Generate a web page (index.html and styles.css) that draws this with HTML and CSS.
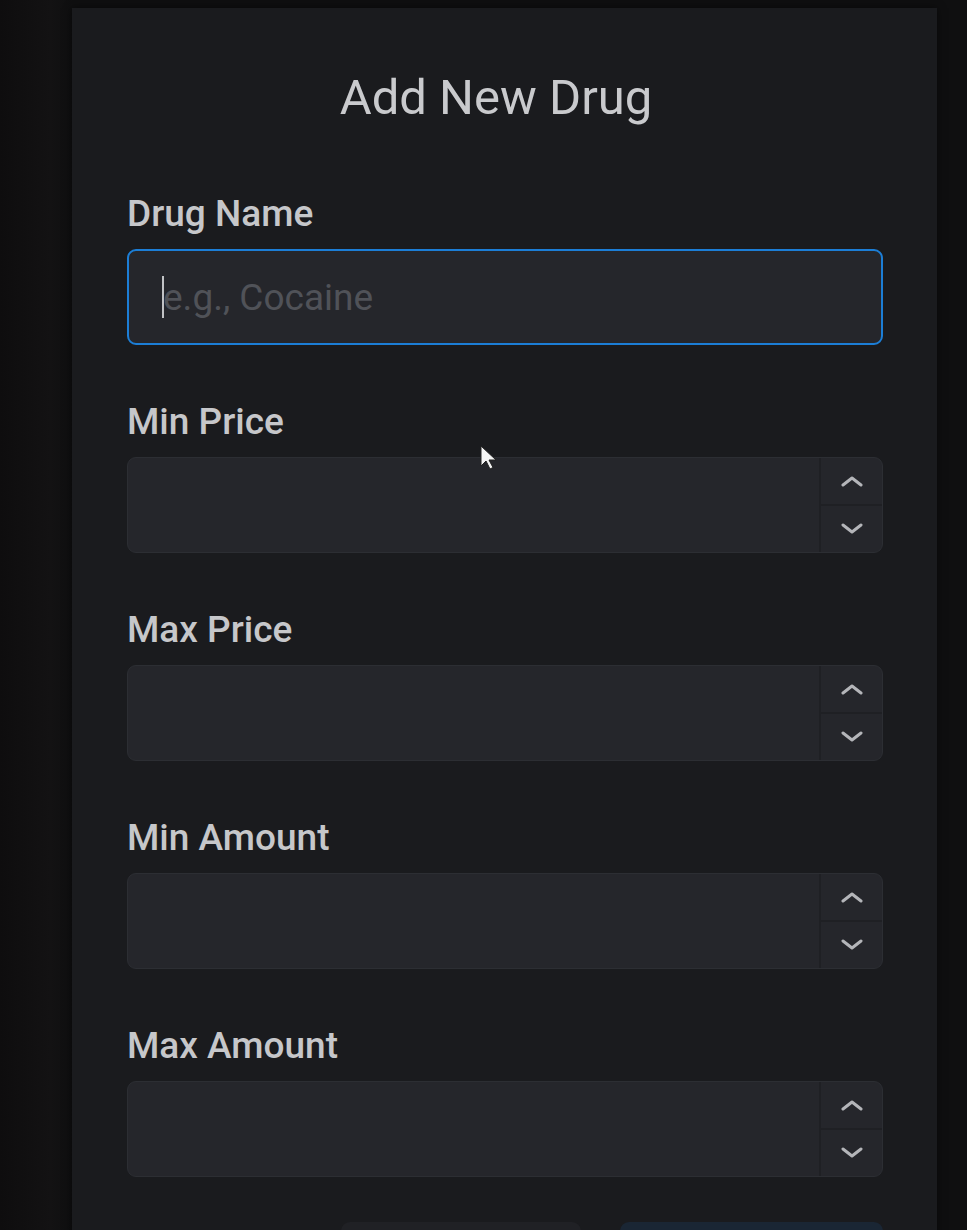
FILE: index.html
```html
<!DOCTYPE html>
<html>
<head>
    <title>Add New Drug</title>
    <link rel="stylesheet" href="styles.css">
</head>
<body>
    <div class="stage">
        <div class="drug-modal">
            <h2 class="modal-title">Add New Drug</h2>

            <div class="form-group">
                <label for="drugName">Drug Name</label>
                <div class="input-wrap focused">
                    <span class="caret"></span>
                    <input type="text" id="drugName" placeholder="e.g., Cocaine">
                </div>
            </div>

            <div class="form-group">
                <label for="minPrice">Min Price</label>
                <div class="input-wrap number">
                    <input type="text" id="minPrice">
                    <div class="controls">
                        <button class="ctrl"><svg viewBox="0 0 24 12"><path d="M3 10 L12 3 L21 10"/></svg></button>
                        <button class="ctrl"><svg viewBox="0 0 24 12"><path d="M3 2 L12 9 L21 2"/></svg></button>
                    </div>
                </div>
            </div>

            <div class="form-group">
                <label for="maxPrice">Max Price</label>
                <div class="input-wrap number">
                    <input type="text" id="maxPrice">
                    <div class="controls">
                        <button class="ctrl"><svg viewBox="0 0 24 12"><path d="M3 10 L12 3 L21 10"/></svg></button>
                        <button class="ctrl"><svg viewBox="0 0 24 12"><path d="M3 2 L12 9 L21 2"/></svg></button>
                    </div>
                </div>
            </div>

            <div class="form-group">
                <label for="minAmount">Min Amount</label>
                <div class="input-wrap number">
                    <input type="text" id="minAmount">
                    <div class="controls">
                        <button class="ctrl"><svg viewBox="0 0 24 12"><path d="M3 10 L12 3 L21 10"/></svg></button>
                        <button class="ctrl"><svg viewBox="0 0 24 12"><path d="M3 2 L12 9 L21 2"/></svg></button>
                    </div>
                </div>
            </div>

            <div class="form-group">
                <label for="maxAmount">Max Amount</label>
                <div class="input-wrap number">
                    <input type="text" id="maxAmount">
                    <div class="controls">
                        <button class="ctrl"><svg viewBox="0 0 24 12"><path d="M3 10 L12 3 L21 10"/></svg></button>
                        <button class="ctrl"><svg viewBox="0 0 24 12"><path d="M3 2 L12 9 L21 2"/></svg></button>
                    </div>
                </div>
            </div>

            <!-- buttons run off the bottom of the view, only their top edge shows -->
            <div class="button-row">
                <button class="btn btn-cancel" aria-label="Cancel"></button>
                <button class="btn btn-add" aria-label="Add Drug"></button>
            </div>
        </div>

        <svg class="pointer" viewBox="0 0 20 26">
            <path d="M1 1 L1 21 L6 16 L10 24 L13 22.5 L9 15 L16 15 Z"/>
        </svg>
    </div>
</body>
</html>
```

FILE: styles.css
```css
html, body {
    margin: 0;
    padding: 0;
}

body {
    background-color: #0f0f10;
    font-family: Roboto, "Liberation Sans", sans-serif;
    color: #c1c2c5;
}

.stage {
    position: relative;
    height: 1230px;
    overflow: hidden;
    padding-top: 8px;
    box-sizing: border-box;
    background: linear-gradient(90deg, #0e0d0e 0px, #131213 50px, #0f0f10 72px);
}

.drug-modal {
    margin-left: 72px;
    width: 865px;
    background-color: #1a1b1e;
    padding: 61px 54px 40px 55px;
    box-sizing: border-box;
    box-shadow: 0 0 8px rgba(0, 0, 0, 0.5);
}

.modal-title {
    margin: 0 0 61px 0;
    text-align: center;
    font-size: 49px;
    font-weight: 400;
    line-height: 57px;
    color: #c9cacd;
    padding-right: 18px;
}

.form-group {
    margin-bottom: 50px;
}

.form-group label {
    display: block;
    font-size: 37px;
    font-weight: 500;
    line-height: 54px;
    margin-bottom: 8px;
    color: #c6c7ca;
}

.input-wrap {
    position: relative;
    display: flex;
    height: 96px;
    box-sizing: border-box;
    background-color: #25262b;
    border: 1px solid #2c2e33;
    border-radius: 9px;
}

.input-wrap.focused {
    border: 2px solid #1c7ed6;
}

.input-wrap input {
    flex: 1;
    min-width: 0;
    background: transparent;
    border: none;
    outline: none;
    padding: 0 0 0 34px;
    font-family: Roboto, "Liberation Sans", sans-serif;
    font-size: 37px;
    color: #c1c2c5;
}

.input-wrap input::placeholder {
    color: #505258;
}

.caret {
    position: absolute;
    left: 33px;
    top: 25px;
    width: 2px;
    height: 42px;
    background-color: #c1c2c5;
}

.controls {
    width: 61px;
    display: flex;
    flex-direction: column;
    border-left: 2px solid #1f2024;
}

.ctrl {
    flex: 1;
    display: flex;
    align-items: center;
    justify-content: center;
    background: transparent;
    border: none;
    padding: 0;
}

.ctrl + .ctrl {
    border-top: 2px solid #1f2024;
}

.ctrl svg {
    width: 24px;
    height: 12px;
    fill: none;
    stroke: #b4b5b9;
    stroke-width: 3;
    stroke-linecap: round;
    stroke-linejoin: round;
}

.button-row {
    display: flex;
    justify-content: flex-end;
    gap: 39px;
    margin-top: -5px;
}

.btn {
    height: 90px;
    border: none;
    border-radius: 9px;
}

.btn-cancel {
    width: 240px;
    background-color: #202125;
}

.btn-add {
    width: 263px;
    background-color: #1a2634;
}

.pointer {
    position: absolute;
    left: 480px;
    top: 445px;
    width: 20px;
    height: 26px;
}

.pointer path {
    fill: #f4f4f4;
    stroke: #222;
    stroke-width: 1;
}
```
